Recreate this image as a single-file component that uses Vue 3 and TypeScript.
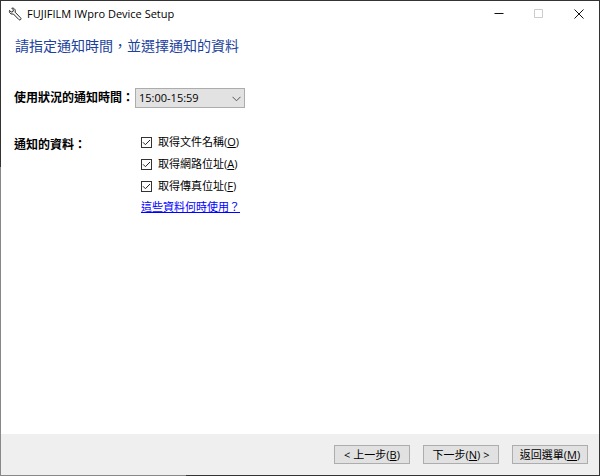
<script setup lang="ts">
import { ref } from 'vue'

interface DataOption {
  id: string
  label: string
  accessKey: string
  checked: boolean
}

const times: string[] = Array.from({ length: 24 }, (_, h) => {
  const hour = String(h).padStart(2, '0')
  return `${hour}:00-${hour}:59`
})
const time = ref<string>('15:00-15:59')

const options = ref<DataOption[]>([
  { id: 'document-name', label: '取得文件名稱', accessKey: 'O', checked: true },
  { id: 'network-address', label: '取得網路位址', accessKey: 'A', checked: true },
  { id: 'fax-address', label: '取得傳真位址', accessKey: 'F', checked: true },
])
</script>

<template>
  <div class="window">
    <header class="titlebar">
      <svg class="app-icon" viewBox="0 0 14 14" aria-hidden="true">
        <path
          d="M3.8 1.2 5.4 2.9 5 4.6 3.2 5 1.5 3.4C1.1 4.8 1.7 6.2 2.9 6.8 3.7 7.2 4.6 7.2 5.3 6.9L10.9 12.6C11.4 13.1 12.2 13.1 12.6 12.6 13.1 12.1 13.1 11.4 12.6 10.9L7.1 5.2C7.5 4.3 7.4 3.2 6.8 2.3 6.1 1.3 5 .9 3.8 1.2Z"
        />
      </svg>
      <span class="title">FUJIFILM IWpro Device Setup</span>
      <div class="controls">
        <button class="control" type="button" aria-label="最小化">
          <svg viewBox="0 0 10 10" aria-hidden="true"><path d="M.5 4.5H9.5" /></svg>
        </button>
        <button class="control" type="button" aria-label="最大化" disabled>
          <svg viewBox="0 0 10 10" aria-hidden="true"><path d="M.5.5H8.5V8.5H.5Z" /></svg>
        </button>
        <button class="control" type="button" aria-label="關閉">
          <svg viewBox="0 0 10 10" aria-hidden="true"><path d="M.5.5 9.5 9.5M9.5.5.5 9.5" /></svg>
        </button>
      </div>
    </header>

    <main class="content">
      <h1 class="heading">請指定通知時間，並選擇通知的資料</h1>

      <div class="row">
        <label class="name" for="time">使用狀況的通知時間：</label>
        <div class="select-box">
          <select id="time" v-model="time">
            <option v-for="t in times" :key="t" :value="t">{{ t }}</option>
          </select>
          <svg class="chevron" viewBox="0 0 9 6" aria-hidden="true"><path d="M.5.8 4.5 4.8 8.5.8" /></svg>
        </div>
      </div>

      <div class="row data" role="group" aria-labelledby="data-name">
        <span id="data-name" class="name">通知的資料：</span>
        <div class="options">
          <label v-for="o in options" :key="o.id" class="option" :for="o.id">
            <input :id="o.id" v-model="o.checked" type="checkbox" />
            <svg class="tick" viewBox="0 0 11 11" aria-hidden="true"><path d="M2 5.3 4.4 7.7 9 3" /></svg>
            <span>{{ o.label }}(<u>{{ o.accessKey }}</u>)</span>
          </label>
          <a class="help" href="#">這些資料何時使用？</a>
        </div>
      </div>
    </main>

    <footer class="footer">
      <button class="action" type="button">&lt; 上一步(<u>B</u>)</button>
      <button class="action" type="button">下一步(<u>N</u>) &gt;</button>
      <button class="action" type="button">返回選單(<u>M</u>)</button>
    </footer>
  </div>
</template>

<style>
body {
  margin: 0;
}
</style>

<style scoped>
.window {
  box-sizing: border-box;
  min-height: 100vh;
  padding: 1px;
  display: flex;
  flex-direction: column;
  font-family: "Open Sans", "Noto Sans CJK TC", sans-serif;
  font-size: 11px;
  line-height: 16px;
  color: #000;
  background:
    linear-gradient(#888, #888) left bottom / 31% 1px no-repeat,
    linear-gradient(#888, #888) left bottom / 1px 65% no-repeat,
    #333;
}

.titlebar {
  display: flex;
  align-items: center;
  height: 25px;
  padding-left: 7px;
  background: #fff;
}

.app-icon {
  width: 14px;
  height: 14px;
  margin-right: 5px;
  fill: none;
  stroke: #222;
  stroke-linejoin: round;
}

.title {
  flex: 1;
  white-space: nowrap;
}

.controls {
  display: flex;
}

.control {
  width: 40px;
  height: 24px;
  padding: 0;
  display: grid;
  place-items: center;
  border: 0;
  background: none;
}

.control svg {
  width: 10px;
  height: 10px;
  fill: none;
  stroke: #111;
}

.control:disabled svg {
  stroke: #ccc;
}

.content {
  flex: 1;
  padding: 8px 14px;
  background: #fff;
}

.heading {
  margin: 0 0 30px;
  font-size: 14px;
  line-height: 24px;
  font-weight: 400;
  color: #1c429c;
}

.row {
  display: flex;
  align-items: center;
  margin-left: -1px;
}

.name {
  width: 121px;
  flex: none;
  font-size: 12px;
  line-height: 20px;
  font-weight: 700;
  white-space: nowrap;
}

.select-box {
  position: relative;
  width: 110px;
}

select {
  display: block;
  width: 100%;
  height: 20px;
  padding: 0 20px 0 3px;
  appearance: none;
  border: 1px solid #acacac;
  border-radius: 0;
  background: #e2e2e2;
  font: inherit;
  color: #000;
}

.chevron {
  position: absolute;
  top: 8px;
  right: 4px;
  width: 9px;
  height: 6px;
  fill: none;
  stroke: #555;
  pointer-events: none;
}

.data {
  align-items: flex-start;
  margin-top: 23px;
}

.data .name {
  padding-top: 4px;
}

.options {
  display: flex;
  flex-direction: column;
  align-items: flex-start;
  padding-left: 6px;
}

.option {
  display: grid;
  grid-template-columns: 11px auto;
  column-gap: 6px;
  align-items: center;
  height: 22px;
}

.option input,
.tick {
  grid-area: 1 / 1;
  width: 11px;
  height: 11px;
}

.option input {
  box-sizing: border-box;
  margin: 0;
  appearance: none;
  border: 1px solid #333;
  background: #fff;
}

.tick {
  visibility: hidden;
  fill: none;
  stroke: #222;
  pointer-events: none;
}

.option input:checked + .tick {
  visibility: visible;
}

.help {
  line-height: 20px;
  color: #00f;
}

.footer {
  display: flex;
  justify-content: flex-end;
  align-items: center;
  gap: 13px;
  height: 41px;
  padding-right: 11px;
  background: #efefef;
}

.action {
  width: 76px;
  height: 19px;
  padding: 0;
  border: 1px solid #adadad;
  background: #e1e1e1;
  font: inherit;
  line-height: 16px;
  color: #000;
  white-space: nowrap;
}
</style>
